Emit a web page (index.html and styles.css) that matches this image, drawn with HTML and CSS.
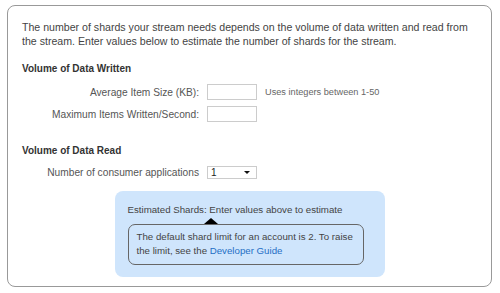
FILE: index.html
```html
<!DOCTYPE html>
<html lang="en">
<head>
    <meta charset="UTF-8">
    <title>Shard Estimator</title>
    <link rel="stylesheet" href="styles.css">
</head>
<body>
    <div class="panel">
        <p class="intro">The number of shards your stream needs depends on the volume of data written and read from the stream. Enter values below to estimate the number of shards for the stream.</p>

        <h3>Volume of Data Written</h3>
        <div class="form-grid">
            <label for="itemSize">Average Item Size (KB):</label>
            <div class="control">
                <input type="text" id="itemSize">
                <span class="hint">Uses integers between 1-50</span>
            </div>
            <label for="itemsPerSec">Maximum Items Written/Second:</label>
            <div class="control">
                <input type="text" id="itemsPerSec">
            </div>
        </div>

        <h3 class="read-heading">Volume of Data Read</h3>
        <div class="form-grid">
            <label for="consumers">Number of consumer applications</label>
            <div class="control">
                <span class="select-wrap">
                    <select id="consumers">
                        <option>1</option>
                        <option>2</option>
                        <option>3</option>
                        <option>4</option>
                        <option>5</option>
                    </select>
                </span>
            </div>
        </div>

        <div class="estimate">
            <p class="estimate-line">Estimated Shards: Enter values above to estimate</p>
            <div class="note">
                The default shard limit for an account is 2. To raise the limit, see the <a href="#">Developer Guide</a>
            </div>
        </div>
    </div>
</body>
</html>
```

FILE: styles.css
```css
body {
    margin: 0;
    background-color: #fff;
    font-family: "Liberation Sans", Arial, sans-serif;
    color: #444;
}
.panel {
    box-sizing: border-box;
    width: 485px;
    height: 282px;
    margin: 5px 0 0 7px;
    padding: 14px 14px 0 14px;
    border: 1px solid #999;
    border-radius: 8px;
}
.intro {
    margin: 0;
    font-size: 10.6px;
    line-height: 14px;
}
h3 {
    margin: 14px 0 8px 0;
    font-size: 10px;
    line-height: 14px;
    font-weight: bold;
    color: #333;
}
.read-heading {
    margin-top: 22px;
    margin-bottom: 8px;
}
.form-grid {
    display: grid;
    grid-template-columns: 177px 1fr;
    column-gap: 8px;
    row-gap: 6px;
    align-items: center;
}
.form-grid label {
    text-align: right;
    font-size: 10.2px;
    color: #555;
}
.control {
    display: flex;
    align-items: center;
    gap: 8px;
}
input[type="text"] {
    box-sizing: border-box;
    width: 50px;
    height: 16px;
    margin: 0;
    padding: 0 3px;
    border: 1px solid #ccc;
    font-size: 10px;
}
.hint {
    font-size: 9.2px;
    color: #666;
}
.select-wrap {
    position: relative;
    display: inline-flex;
}
select {
    appearance: none;
    box-sizing: border-box;
    width: 50px;
    height: 13px;
    margin: 0;
    padding: 0 0 0 3px;
    border: 1px solid #ccc;
    background: #fff;
    font-family: "Liberation Sans", Arial, sans-serif;
    font-size: 10px;
    line-height: 11px;
    color: #222;
}
.select-wrap::after {
    content: "";
    position: absolute;
    right: 7px;
    top: 5px;
    border-left: 3px solid transparent;
    border-right: 3px solid transparent;
    border-top: 3px solid #111;
    pointer-events: none;
}
.estimate {
    box-sizing: border-box;
    width: 270px;
    height: 86px;
    margin: 12px auto 0 auto;
    padding: 12px 13px 0 13px;
    background-color: #cfe5fc;
    border-radius: 8px;
}
.estimate-line {
    margin: 0;
    font-size: 9.7px;
    line-height: 14px;
    color: #444;
}
.note {
    position: relative;
    box-sizing: border-box;
    width: 236px;
    height: 41px;
    margin-top: 7px;
    padding: 5px 8px 0 8px;
    border: 1px solid #666;
    border-radius: 7px;
    font-size: 9.7px;
    line-height: 14px;
    color: #444;
}
.note::before {
    content: "";
    position: absolute;
    left: 75px;
    top: -7px;
    border-left: 7px solid transparent;
    border-right: 7px solid transparent;
    border-bottom: 6px solid #000;
}
.note a {
    color: #1f6fc5;
    text-decoration: none;
}
```
